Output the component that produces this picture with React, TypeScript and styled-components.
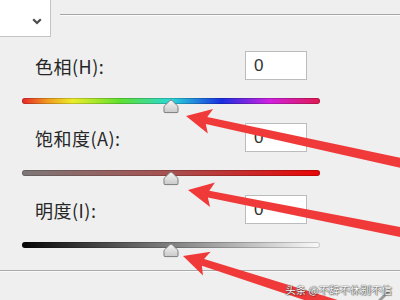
import React from "react";
import styled, { createGlobalStyle } from "styled-components";

const GlobalStyle = createGlobalStyle`
  html, body {
    margin: 0;
    padding: 0;
    background: #efefef;
  }
  body {
    font-family: "Noto Sans CJK SC", "Noto Sans", sans-serif;
  }
`;

const Page = styled.div`
  position: relative;
  width: 400px;
  height: 300px;
  overflow: hidden;
  background: #efefef;
`;

const TopBar = styled.div`
  display: flex;
  align-items: flex-start;
  height: 37px;
`;

const Dropdown = styled.div`
  box-sizing: border-box;
  width: 52px;
  height: 38px;
  margin: -1px 0 0 -1px;
  padding: 6px 8px 0 0;
  display: flex;
  align-items: center;
  justify-content: flex-end;
  background: #fff;
  border: 1px solid #c4c4c4;
`;

const EtchedLine = styled.div`
  flex: 1;
  margin: 14px 0 0 9px;
  height: 1px;
  background: #a6a6a6;
  border-bottom: 1px solid #fbfbfb;
`;

const Panel = styled.div`
  padding: 14px 0 0 22px;
`;

const Group = styled.div`
  height: 72px;
`;

const FieldRow = styled.div`
  display: flex;
  align-items: center;
  height: 29px;
`;

const Label = styled.div`
  box-sizing: border-box;
  width: 223px;
  padding-left: 13px;
  font-size: 18px;
  color: #262626;
  letter-spacing: 0.5px;
`;

const ValueBox = styled.div`
  box-sizing: border-box;
  width: 62px;
  height: 29px;
  padding-left: 8px;
  background: #fff;
  border: 1px solid #bcbcbc;
  font-family: "Liberation Sans", sans-serif;
  font-size: 17px;
  line-height: 27px;
  color: #333;
`;

const Track = styled.div<{ $fill: string }>`
  position: relative;
  margin-top: 18px;
  width: 298px;
  height: 6px;
  border-radius: 3px;
  background: ${(p) => p.$fill};
  box-shadow: inset 0 0 0 1px rgba(0, 0, 0, 0.18);
`;

const ThumbWrap = styled.div`
  position: absolute;
  left: 50%;
  top: 1px;
  transform: translateX(-50%);
  display: flex;
`;

const Divider = styled.div`
  margin-top: 3px;
  height: 1px;
  background: #a9a9a9;
  border-bottom: 1px solid #fafafa;
`;

const Overlay = styled.svg`
  position: absolute;
  left: 0;
  top: 0;
  pointer-events: none;
`;

const Watermark = styled.div`
  position: absolute;
  right: 8px;
  bottom: 3px;
  font-size: 10.5px;
  color: #fafafa;
  letter-spacing: 0;
  text-shadow: 0 0 1px #444, 0 0 1px #444, 1px 1px 1px rgba(0, 0, 0, 0.35);
`;

const Chevron = () => (
  <svg width="10" height="7" viewBox="0 0 10 7">
    <path d="M1.2 1.2 L5 5 L8.8 1.2" fill="none" stroke="#4a4a4a" strokeWidth="2.2" />
  </svg>
);

const Thumb = () => (
  <svg width="16" height="15" viewBox="0 0 16 15">
    <defs>
      <linearGradient id="thumbFill" x1="0" y1="0" x2="0" y2="1">
        <stop offset="0" stopColor="#f6f6f6" />
        <stop offset="1" stopColor="#c9c9c9" />
      </linearGradient>
    </defs>
    <path
      d="M7 1.4 Q8 0.6 9 1.4 L14.4 6.8 Q15 7.4 15 8.4 L15 12.6 Q15 13.6 14 13.6 L2 13.6 Q1 13.6 1 12.6 L1 8.4 Q1 7.4 1.6 6.8 Z"
      fill="url(#thumbFill)"
      stroke="#7c7c7c"
      strokeWidth="1"
    />
  </svg>
);

type Pt = [number, number];

function arrowPoints(tip: Pt, tail: Pt, tailHalf: number) {
  const dx = tail[0] - tip[0];
  const dy = tail[1] - tip[1];
  const len = Math.hypot(dx, dy);
  const ux = dx / len;
  const uy = dy / len;
  const px = -uy;
  const py = ux;
  const at = (a: number, b: number): string =>
    `${(tip[0] + ux * a + px * b).toFixed(1)},${(tip[1] + uy * a + py * b).toFixed(1)}`;
  return [
    at(0, 0),
    at(25, 12.5),
    at(21, 3.5),
    at(len, tailHalf),
    at(len, -tailHalf),
    at(21, -3.5),
    at(25, -12.5),
  ].join(" ");
}

const arrows: { tip: Pt; tail: Pt; half: number }[] = [
  { tip: [186, 116], tail: [420, 167], half: 5 },
  { tip: [188, 190], tail: [420, 236], half: 5 },
  { tip: [183, 256], tail: [420, 332], half: 6.5 },
];

const fields = [
  {
    label: "色相(H):",
    value: "0",
    fill: "linear-gradient(90deg, #e8262a 0%, #f0a020 9%, #ecec2a 17%, #5ee030 33%, #28d8d8 50%, #1a2ee0 67%, #d020e0 83%, #e01850 100%)",
  },
  {
    label: "饱和度(A):",
    value: "0",
    fill: "linear-gradient(90deg, #7d7878 0%, #a85050 50%, #e80606 100%)",
  },
  {
    label: "明度(I):",
    value: "0",
    fill: "linear-gradient(90deg, #050505 0%, #808080 50%, #fafafa 100%)",
  },
];

export default function App() {
  return (
    <Page>
      <GlobalStyle />
      <TopBar>
        <Dropdown>
          <Chevron />
        </Dropdown>
        <EtchedLine />
      </TopBar>
      <Panel>
        {fields.map((f) => (
          <Group key={f.label}>
            <FieldRow>
              <Label>{f.label}</Label>
              <ValueBox>{f.value}</ValueBox>
            </FieldRow>
            <Track $fill={f.fill}>
              <ThumbWrap>
                <Thumb />
              </ThumbWrap>
            </Track>
          </Group>
        ))}
      </Panel>
      <Divider />
      <Overlay width="400" height="300" viewBox="0 0 400 300">
        {arrows.map((a, i) => (
          <polygon key={i} points={arrowPoints(a.tip, a.tail, a.half)} fill="#f03a3a" />
        ))}
        <path d="M379 301 L389 291" stroke="#9a9a9a" strokeWidth="3" strokeLinecap="round" />
      </Overlay>
      <Watermark>头条 @不辞不休别不信</Watermark>
    </Page>
  );
}
